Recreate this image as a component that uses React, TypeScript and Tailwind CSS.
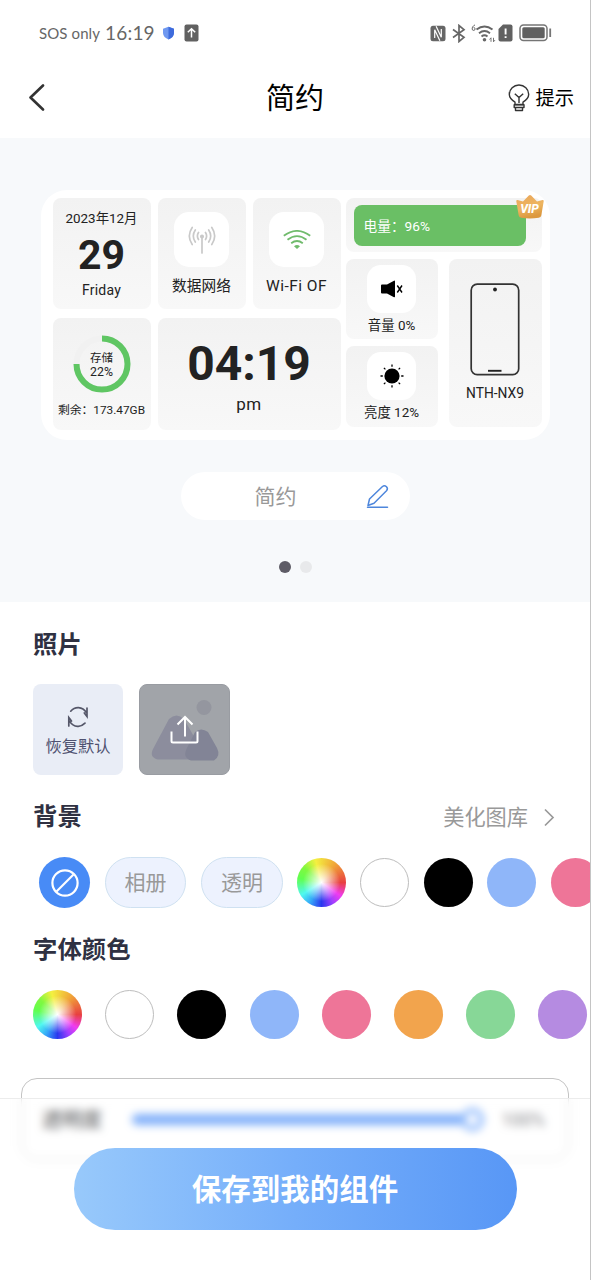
import React from 'react';
import clsx from 'clsx';

const FONT = "font-[Roboto,'Noto_Sans_CJK_SC',sans-serif]";

const colors = {
    white: 'bg-white border border-[#bdbdbd]',
    black: 'bg-black',
    blue: 'bg-[#8fb6f9]',
    pink: 'bg-[#ee7598]',
    orange: 'bg-[#f2a44d]',
    green: 'bg-[#87d797]',
    purple: 'bg-[#b58be1]',
};

const wheel =
    'bg-[radial-gradient(circle,#ffffff_0%,#ffffff00_54%),conic-gradient(from_90deg,#e84040,#f03cf0_35deg,#a040ff_60deg,#2a38ee_90deg,#36a8f8_120deg,#50f8f0_148deg,#60ff50_190deg,#80f840_220deg,#f4f040_255deg,#f0a838_305deg,#e84040)]';

const backgroundColors = [wheel, colors.white, colors.black, colors.blue, colors.pink];
const fontColors = [wheel, colors.white, colors.black, colors.blue, colors.pink, colors.orange, colors.green, colors.purple];

const Swatch = ({ color }: { color: string }) => (
    <div className={clsx('h-[49px] w-[49px] shrink-0 rounded-full', color)} />
);

const Tile = ({ className, children }: { className?: string; children?: React.ReactNode }) => (
    <div className={clsx('flex flex-col items-center rounded-lg bg-linear-to-b from-[#f2f2f2] to-[#f8f8f8] text-[#222] whitespace-nowrap', className)}>
        {children}
    </div>
);

const StatusBar = () => (
    <div className="flex h-[66px] items-center pl-[39px] pr-[38px] text-[#666]">
        <span className="w-[63px] whitespace-nowrap font-[Lato] text-[15px] leading-5 tracking-[0.1px]">SOS only</span>
        <span className="ml-[3px] w-[50px] whitespace-nowrap font-[Lato] text-[19px] leading-5 tracking-[0.2px]">16:19</span>
        <svg className="ml-[7px]" width="13" height="14" viewBox="0 0 13 14">
            <path d="M6.5 0.8 12 2.7V7c0 3-2.3 5.2-5.5 6.500C3.300 12.200 1 10 1 7V2.700Z" fill="#6f98f0" />
            <path d="M6.500 .8 12 2.700V7c0 3-2.300 5.200-5.500 6.500Z" fill="#3e6bdc" />
        </svg>
        <svg className="ml-[9px]" width="15" height="18" viewBox="0 0 15 18">
            <rect x="0.500" y="0.500" width="14" height="17" rx="2" fill="#616161" />
            <path d="M7.500 13.500V5M3.800 8.300 7.500 4.700l3.700 3.600" fill="none" stroke="#fff" strokeWidth="1.500" />
        </svg>

        <div className="ml-auto flex items-center">
            <svg width="16" height="17" viewBox="0 0 16 17" fill="none">
                <rect x=".5" y=".7" width="15" height="15.600" rx="2.500" fill="#666" />
                <path d="M4.700 13V4.700L9.900 15.800M11.300 4v8.300L6.100 1.200" stroke="#fff" strokeWidth="1.200" />
            </svg>
            <svg className="ml-[6px]" width="14" height="19" viewBox="0 0 14 19" fill="none" stroke="#666" strokeWidth="1.700">
                <path d="M1 5.500 12 13.300 7 17.500V1.500l5 4.200L1 13.500" />
            </svg>
            <svg className="ml-[5px]" width="25" height="19" viewBox="0 0 25 19" fill="none" stroke="#666">
                <path d="M4 .9C1.800 2 1 3.500 1.200 5.100a1.450 1.450 0 1 0 1.400-1.600" strokeWidth="1" />
                <path d="M5.500 5.500Q13.500-.7 21.500 5.500M8 9.200q5.500-4.300 11 0M10.500 12.500q3-2.300 6 0" strokeWidth="1.900" />
                <circle cx="13.500" cy="15.800" r="1.800" fill="#666" stroke="none" />
                <path d="M20 17.800v-4l-1.500 1.700M22.500 13.800v4l1.500-1.700" strokeWidth=".9" />
            </svg>
            <svg className="ml-[2px]" width="15" height="18" viewBox="0 0 15 18">
                <path d="M5 .500h7.500q2 0 2 2v13q0 2-2 2h-10q-2 0-2-2V5Z" fill="#616161" />
                <path d="M7.600 4.500v6M7.600 12.200v1.800" stroke="#fff" strokeWidth="1.900" />
            </svg>
            <svg className="ml-[6px]" width="33" height="18" viewBox="0 0 33 18">
                <rect x="1" y="1" width="27" height="15.500" rx="3.500" fill="none" stroke="#757575" strokeWidth="1.500" />
                <rect x="3.300" y="3.300" width="22.400" height="10.900" rx="1.500" fill="#606060" />
                <path d="M31.200 4.500v8.500" stroke="#757575" strokeWidth="1.800" />
            </svg>
        </div>
    </div>
);

const NavBar = () => (
    <div className="flex h-[72px] items-center justify-between pb-[9px] pl-[28px] pr-[16px]">
        <div className="w-[100px]">
            <svg className="-mt-[2px]" width="18" height="28" viewBox="0 0 18 28" fill="none" stroke="#333" strokeWidth="2.600" strokeLinecap="round" strokeLinejoin="round">
                <path d="M15 2.500 2.500 14.500 15 26.500" />
            </svg>
        </div>
        <h1 className="mt-[2px] text-center text-[29px] leading-9 text-black">简约</h1>
        <div className="flex w-[112px] items-center justify-end whitespace-nowrap">
            <svg width="22" height="28" viewBox="0 0 22 28" fill="none" stroke="#333" strokeWidth="1.400" strokeLinejoin="round">
                <path d="M7 20.500v-2.300C3.500 16 1.300 13.800 1.300 10.300a9.700 9.300 0 0 1 19.400 0c0 3.500-2.200 5.700-5.700 7.900v2.300Z" />
                <path d="M11 19v-6M6.800 9.700l4.200 3.800 4.200-3.800M6.200 20.800h9.800v2.700H6.200ZM7.500 23.800v2.700h7v-2.700" />
            </svg>
            <span className="ml-[5px] mt-[3px] text-[19.300px] leading-7 text-black">提示</span>
        </div>
    </div>
);

const IconBox = ({ className, children }: { className?: string; children: React.ReactNode }) => (
    <div className={clsx('flex shrink-0 items-center justify-center bg-white', className)}>{children}</div>
);

const StorageRing = () => (
    <div className="relative mt-[17px] h-[58px] w-[58px]">
        <svg width="58" height="58" viewBox="0 0 58 58" fill="none" strokeWidth="6">
            <circle cx="29" cy="29" r="25.500" stroke="#f1f1f1" />
            <path d="M29 3.500A25.500 25.500 0 1 1 3.500 29" stroke="#5fc663" />
        </svg>
        <div className="absolute inset-0 flex flex-col items-center justify-center pt-[2px] text-[11.500px] leading-[14px]">
            <span>存储</span>
            <span className="text-[12.300px]">22%</span>
        </div>
    </div>
);

const VipBadge = () => (
    <div className="absolute -right-[2px] -top-[4px] flex h-[26px] w-[28px] items-center justify-center">
        <svg className="absolute inset-0" width="28" height="26" viewBox="0 0 28 26">
            <defs>
                <linearGradient id="vip" x1="0" y1="0" x2="0.300" y2="1">
                    <stop offset="0" stopColor="#eaa65c" />
                    <stop offset=".6" stopColor="#edb560" />
                    <stop offset="1" stopColor="#dc983e" />
                </linearGradient>
            </defs>
            <path d="M.3 7.300q-.2-1.300 1.200-1.200L7 7.500 12.800 1.500q1.200-1 2.400 0L21 7.500l5.500-1.400q1.500-.1 1.200 1.200L25.300 21.500q-.4 2-2.500 2.200-8.800 1.600-17.600 0Q3.100 23.500 2.700 21.500Z" fill="url(#vip)" />
        </svg>
        <span className="relative mt-[3px] text-[12px] font-extrabold italic leading-none text-white">VIP</span>
    </div>
);

const WidgetPreview = () => (
    <div className="mx-auto flex h-[250px] w-[509px] gap-[5px] rounded-[26px] bg-white pl-3 pr-2 pt-2">
        <div className="grid h-[232px] w-[288px] grid-cols-[98px_88px_88px] grid-rows-[111px_112px] gap-x-[7px] gap-y-[9px]">
            <Tile>
                <span className="mt-[12px] text-[13.400px] leading-[18px]">2023年12月</span>
                <span className="mt-[6px] text-[41px] font-bold leading-[42px]">29</span>
                <span className="mt-[5px] text-[14px] leading-[18px] tracking-[0.200px]">Friday</span>
            </Tile>
            <Tile>
                <IconBox className="mt-[14px] h-[55px] w-[55px] rounded-[15px]">
                    <svg width="28" height="30" viewBox="0 0 28 30" fill="none" stroke="#c9c9c9" strokeWidth="1.700" strokeLinecap="round">
                        <path d="M14 12v16M10.500 7.500q-2.200 3.500 0 7M17.500 7.500q2.200 3.500 0 7M7.300 5q-4 6 0 12M20.700 5q4 6 0 12M4.200 2.500q-5.800 8.500 0 17M23.800 2.500q5.800 8.500 0 17" />
                        <circle cx="14" cy="11.500" r="1.200" fill="#c9c9c9" />
                    </svg>
                </IconBox>
                <span className="mt-[9px] text-[14.700px] leading-[20px]">数据网络</span>
            </Tile>
            <Tile>
                <IconBox className="mt-[14px] h-[55px] w-[55px] rounded-[15px]">
                    <svg width="28" height="20" viewBox="0 0 28 20" fill="none" stroke="#70bb6c" strokeWidth="1.800">
                        <path d="M.8 5.800q13.200-9.800 26.400 0M4.500 9.800q9.500-7.400 19 0M8.200 13.300q5.800-4.500 11.600 0" />
                        <path d="M11 16.200q3-2.200 6 0l-3 2.800Z" fill="#70bb6c" stroke="none" />
                    </svg>
                </IconBox>
                <span className="mt-[9px] text-[15.500px] leading-[20px] tracking-[0.450px]">Wi-Fi OF</span>
            </Tile>
            <Tile>
                <StorageRing />
                <span className="mt-[8px] text-[11.800px] leading-[18px]">剩余：173.47GB</span>
            </Tile>
            <Tile className="col-span-2">
                <span className="mt-[21px] text-[48px] font-bold leading-[50px]">04:19</span>
                <span className="mt-[5px] text-[17px] leading-[20px] tracking-[0.400px]">pm</span>
            </Tile>
        </div>

        <div className="flex w-[196px] flex-col gap-[7px]">
            <div className="relative">
                <Tile className="h-[54px] items-start pl-2 pt-[7px]">
                    <div className="flex h-[41px] w-[172px] items-center rounded-lg bg-[#6abf65] pl-[10px] pt-px text-[13.700px] text-white">
                        电量：96%
                    </div>
                </Tile>
                <VipBadge />
            </div>
            <div className="grid grid-cols-[92px_93px] grid-rows-[80px_81px] gap-x-[11px] gap-y-[7px]">
                <Tile>
                    <IconBox className="mt-[6px] h-[48px] w-[49px] rounded-[14px]">
                        <svg width="24" height="18" viewBox="0 0 24 18">
                            <path d="M2 4.500h5L14 .7q1-.4 1 .7v15.200q0 1-1 .6L7 13.500H2q-1 0-1-1v-7q0-1 1-1Z" fill="#000" />
                            <path d="m17.300 5.500 4.700 7M22 5.500l-4.700 7" stroke="#000" strokeWidth="1.400" />
                        </svg>
                    </IconBox>
                    <span className="mt-[4px] text-[13.400px] leading-[18px]">音量 0%</span>
                </Tile>
                <Tile className="row-span-2">
                    <svg className="mt-[24px]" width="50" height="93" viewBox="0 0 50 93">
                        <rect x="1.200" y="1.200" width="47.500" height="90.500" rx="6" fill="none" stroke="#333" strokeWidth="1.700" />
                        <circle cx="25" cy="6.500" r="1.900" fill="#222" />
                        <path d="M18 87.800h13.500" stroke="#222" strokeWidth="1.900" />
                    </svg>
                    <span className="mt-[8px] text-[13.800px] leading-[18px]">NTH-NX9</span>
                </Tile>
                <Tile>
                    <IconBox className="mt-[6px] h-[48px] w-[49px] rounded-[14px]">
                        <svg width="24" height="24" viewBox="0 0 24 24" stroke="#000" strokeWidth="1.300">
                            <circle cx="12" cy="12" r="7.600" stroke="none" />
                            <path d="M12 .500v2.300M12 21.200v2.300M.5 12h2.300M21.200 12h2.300M3.900 3.900l1.500 1.500M18.600 18.600l1.500 1.500M3.900 20.100l1.500-1.500M18.600 5.400l1.500-1.500" />
                        </svg>
                    </IconBox>
                    <span className="mt-[4px] text-[13.400px] leading-[18px]">亮度 12%</span>
                </Tile>
            </div>
        </div>
    </div>
);

const PreviewSection = () => (
    <section className="h-[464px] bg-[#f7f9fb] pt-[52px]">
        <WidgetPreview />
        <div className="mx-auto mt-[32px] flex h-[48px] w-[229px] items-center rounded-full bg-white">
            <span className="ml-[74px] mt-px text-[21px] leading-7 text-[#999]">简约</span>
            <svg className="ml-[69px]" width="24" height="25" viewBox="0 0 24 25" fill="none" stroke="#4d86dc" strokeWidth="1.500" strokeLinecap="round" strokeLinejoin="round">
                <path d="M2 21.500 3.500 15 16.500 2.500q2-1.500 4 .3 1.800 2 0 4L8 19.300Z" />
                <path d="M1.500 23.300h20" />
            </svg>
        </div>
        <div className="mt-[41px] flex justify-center gap-[9px]">
            <span className="h-[12px] w-[12px] rounded-full bg-[#5e5c66]" />
            <span className="h-[12px] w-[12px] rounded-full bg-[#e8e9eb]" />
        </div>
    </section>
);

const SectionTitle = ({ children }: { children: React.ReactNode }) => (
    <h2 className="text-[24.400px] font-bold leading-[36px] text-[#2f3142]">{children}</h2>
);

const Photos = () => (
    <section className="px-[33px] pt-[25px]">
        <SectionTitle>照片</SectionTitle>
        <div className="mt-[21px] flex gap-[16px]">
            <button className="flex h-[91px] w-[90px] flex-col items-center rounded-lg bg-[#e9edf6] pt-[22px] text-[#4f5270]">
                <svg width="22" height="22" viewBox="0 0 22 22" fill="none" stroke="#555769" strokeWidth="1.700" strokeLinecap="round">
                    <path d="M3.700 5.200Q7 1.400 11.500 1.600q5 .3 8 5.200M20 2v8.500L17.300 7M18 17.200q-3.500 3.500-7.500 3.100-5-.3-8-5.200M1.800 20v-8.500L4.500 15" />
                </svg>
                <span className="mt-[7px] text-[16.300px] leading-[24px]">恢复默认</span>
            </button>
            <button className="h-[91px] w-[91px] overflow-hidden rounded-lg border border-[#999ca2] bg-[#a1a4a9]">
                <svg width="89" height="89" viewBox="0 0 89 89" fill="none">
                    <circle cx="64" cy="22.500" r="7.500" fill="#94969f" />
                    <path d="M29 34q7.500-7 15 0l17 30q4 8-5 10.500H18q-9-2-5-10.500Z" fill="#8c8d9d" />
                    <path d="M55 47q6-5 13 0l9 16q4 8-3 12.500H51q-9-3-4-12.500Z" fill="#828496" />
                    <path d="M45 51.500V32M37.500 39.500 45 32l7.500 7.500M31.500 46.500v9.500q0 1.500 1.500 1.500h23q1.500 0 1.500-1.500v-9.500" stroke="#fff" strokeWidth="2" />
                </svg>
            </button>
        </div>
    </section>
);

const Backgrounds = () => (
    <section className="pt-[24px]">
        <div className="flex items-center justify-between pl-[33px] pr-[35px]">
            <SectionTitle>背景</SectionTitle>
            <div className="flex items-center text-[#999]">
                <span className="mt-px text-[21.200px] leading-8">美化图库</span>
                <svg className="ml-[15px]" width="12" height="19" viewBox="0 0 12 19" fill="none" stroke="#999" strokeWidth="1.700">
                    <path d="m2 1.500 8 8-8 8" />
                </svg>
            </div>
        </div>
        <div className="mt-[22px] flex h-[51px] items-center overflow-hidden pl-[39px]">
            <button className="flex h-[51px] w-[51px] shrink-0 items-center justify-center rounded-full bg-[#488bf6]">
                <svg width="28" height="28" viewBox="0 0 28 28" fill="none" stroke="#fff" strokeWidth="2.200">
                    <circle cx="14" cy="14" r="12.600" />
                    <path d="M5.500 22.500 22.500 5.500" />
                </svg>
            </button>
            <button className="ml-[15px] h-[51px] w-[81px] shrink-0 rounded-full border-[1.500px] border-[#cfe1f1] bg-[#edf2fe] pt-[2px] text-[21px] text-[#999]">相册</button>
            <button className="ml-[15px] h-[51px] w-[82px] shrink-0 rounded-full border-[1.500px] border-[#cfe1f1] bg-[#edf2fe] pt-[2px] text-[21px] text-[#999]">透明</button>
            <div className="ml-[14px] flex gap-[14.400px]">
                {backgroundColors.map((color, i) => <Swatch key={i} color={color} />)}
            </div>
        </div>
    </section>
);

const FontColors = () => (
    <section className="pt-[24px]">
        <div className="pl-[33px]">
            <SectionTitle>字体颜色</SectionTitle>
        </div>
        <div className="mt-[22px] flex gap-[23.200px] overflow-hidden pl-[33px]">
            {fontColors.map((color, i) => <Swatch key={i} color={color} />)}
        </div>
    </section>
);

const OpacityCard = () => (
    <section className="mx-[21px] mt-[39px] flex h-[82px] items-center rounded-[16px] border border-[#c4c4c4] pl-[20px] pr-[23px]">
        <span className="mt-px w-[62px] text-[20px] font-medium text-[#1c1d24]">透明度</span>
        <div className="relative ml-[28px] h-[11px] w-[352px] rounded-full bg-[#3e86f7]">
            <div className="absolute -top-[6px] right-0 h-[23px] w-[23px] rounded-full border-[5px] border-[#5c9afa] bg-white" />
        </div>
        <span className="ml-auto text-[18px] text-[#44444a]">100%</span>
    </section>
);

const SaveBar = () => (
    <div className="absolute inset-x-0 bottom-0 flex h-[182px] justify-center border-t border-[#ececec] bg-white/35 pt-[49px] backdrop-blur-[4px]">
        <button className="h-[82px] w-[443px] rounded-full bg-linear-to-r from-[#98c9fb] via-[#75aefa] to-[#5897f6] pt-[3px] text-[29.500px] font-bold text-white">
            保存到我的组件
        </button>
    </div>
);

const App: React.FC = () => {
    return (
        <div className={clsx('relative h-[1280px] w-full overflow-hidden border-r border-[#c4c4c4] bg-white', FONT)}>
            <StatusBar />
            <NavBar />
            <PreviewSection />
            <Photos />
            <Backgrounds />
            <FontColors />
            <OpacityCard />
            <SaveBar />
        </div>
    );
};

export default App;
